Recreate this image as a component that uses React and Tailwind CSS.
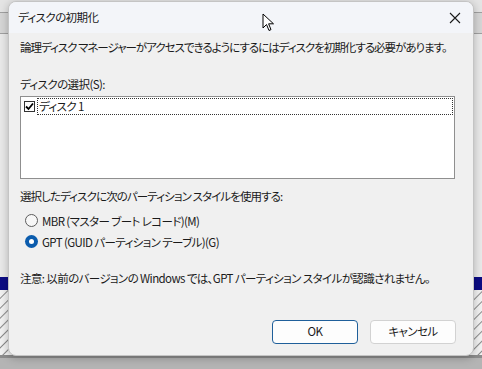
import React from "react";

const jp = "font-['Noto_Sans_CJK_JP','Noto_Sans',sans-serif] [font-feature-settings:'palt'] text-[11.5px] tracking-[-0.6px]";

function Radio({ checked, label }) {
  return (
    <div className="flex items-center h-[21px]">
      {checked ? (
        <span className="ml-[12px] w-[13px] h-[13px] rounded-full bg-[#0b5cad] flex items-center justify-center">
          <span className="w-[5px] h-[5px] rounded-full bg-white" />
        </span>
      ) : (
        <span className="ml-[12px] w-[13px] h-[13px] rounded-full border border-[#5c5c5c] bg-[#f7f7f7]" />
      )}
      <span className="ml-[4px] leading-[16px] whitespace-nowrap text-[#1a1a1a]">{label}</span>
    </div>
  );
}

export default function App() {
  return (
    <div className={`relative w-[482px] h-[369px] overflow-hidden bg-[#d8d8d8] ${jp}`}>
      {/* background window behind the dialog */}
      <div className="flex flex-col h-full">
        <div className="h-[12px] bg-[#e4e4e4]" />
        <div className="h-[22px] bg-[#d6d6d6] border-y border-[#a0a0a0]" />
        <div className="h-[243px] bg-[#e9e9e9]" />
        <div className="h-[13px] bg-[#0c0c84]" />
        <div className="h-[65px] bg-[repeating-linear-gradient(135deg,#f2f2f2_0px,#f2f2f2_5px,#8a8a8a_6px,#f2f2f2_7px)]" />
        <div className="flex-1 bg-[#b4b4b4] border-t-[3px] border-[#8c8c8c]" />
      </div>

      {/* dialog */}
      <div className="absolute left-[8px] top-[1px] w-[466px] h-[355px] rounded-[8px] border border-[#c4c4c4] bg-[#f0f0f0] shadow-[0_2px_8px_rgba(0,0,0,0.25)] overflow-hidden flex flex-col">
        <div className="h-[31px] shrink-0 bg-[#f3f5f9] flex items-center justify-between pl-[9px] pr-[8px]">
          <span className="text-[#1a1a1a]">ディスクの初期化</span>
          <svg width="12" height="12" viewBox="0 0 12 12" className="mr-[4px]">
            <path d="M1 1L11 11M11 1L1 11" stroke="#1a1a1a" strokeWidth="1.1" />
          </svg>
        </div>

        <div className="flex flex-col pl-[11px] pr-[17px]">
          <p className="mt-[6px] leading-[16px] whitespace-nowrap tracking-[-1px] text-[#1a1a1a]">
            論理ディスク マネージャーがアクセスできるようにするにはディスクを初期化する必要があります。
          </p>
          <p className="mt-[21px] leading-[16px] text-[#1a1a1a]">ディスクの選択(S):</p>
          <div className="mt-[4px] w-[435px] h-[83px] bg-white border border-[#8f8f8f] p-[1px]">
            <div className="flex items-center h-[17px]">
              <span className="ml-[2px] w-[11px] h-[11px] border border-[#333] bg-white flex items-center justify-center">
                <svg width="9" height="9" viewBox="0 0 9 9">
                  <path d="M1 4.5L3.5 7L8 1.5" fill="none" stroke="#000" strokeWidth="1.8" />
                </svg>
              </span>
              <span className="ml-[2px] flex-1 h-[17px] border border-dotted border-[#333] flex items-center pl-[1px] text-[#1a1a1a]">
                ディスク 1
              </span>
            </div>
          </div>

          <p className="mt-[9px] leading-[16px] whitespace-nowrap tracking-[-0.9px] text-[#1a1a1a]">
            選択したディスクに次のパーティション スタイルを使用する:
          </p>
          <div className="mt-[6px] -ml-[11px] pl-[4px]">
            <Radio label="MBR (マスター ブート レコード)(M)" />
            <Radio checked label="GPT (GUID パーティション テーブル)(G)" />
          </div>

          <p className="mt-[18px] leading-[16px] whitespace-nowrap text-[#1a1a1a]">
            注意: 以前のバージョンの Windows では、GPT パーティション スタイルが認識されません。
          </p>

          <div className="mt-[34px] flex justify-end gap-[12px]">
            <button className="w-[86px] h-[24px] rounded-[4px] border border-[#1f5f9a] bg-[#fdfdfd] text-[#1a1a1a]">
              OK
            </button>
            <button className="w-[86px] h-[24px] rounded-[4px] border border-[#d2d2d2] bg-[#fdfdfd] text-[#1a1a1a]">
              キャンセル
            </button>
          </div>
        </div>
      </div>

      {/* mouse pointer */}
      <svg className="absolute left-[262px] top-[13px]" width="13" height="19" viewBox="0 0 13 19">
        <path d="M1 1L1 15L4.5 11.5L7 17.5L9 16.6L6.6 10.8L11.5 10.8Z" fill="#fff" stroke="#000" strokeWidth="1" strokeLinejoin="round" />
      </svg>
    </div>
  );
}
